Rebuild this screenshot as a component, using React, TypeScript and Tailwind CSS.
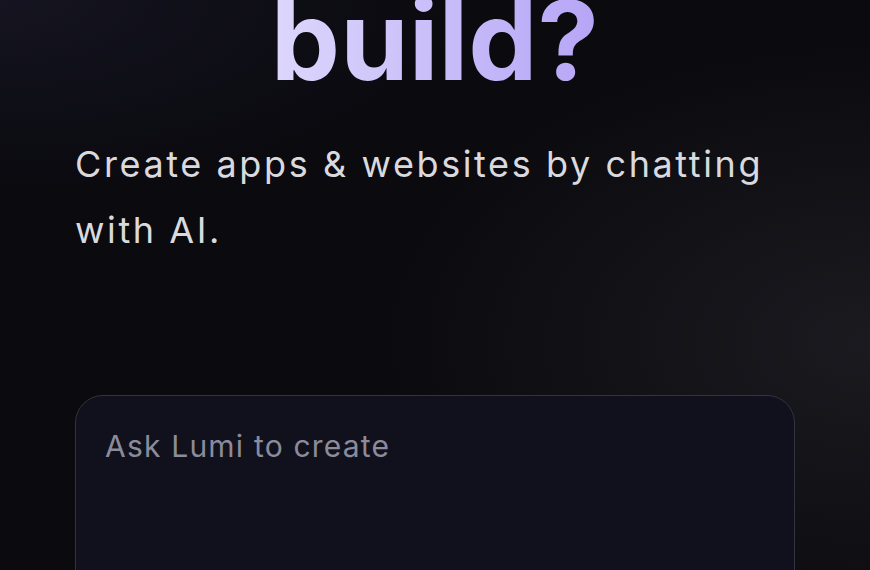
import React, { useState } from 'react';

const App: React.FC = () => {
  const [prompt, setPrompt] = useState('');

  return (
    <div className="relative h-[570px] w-full overflow-hidden bg-[#0a0a0f] font-['Inter',sans-serif]">
      {/* soft lighting behind content */}
      <div className="pointer-events-none absolute inset-0 bg-[radial-gradient(ellipse_75%_70%_at_100%_60%,rgba(38,37,43,0.6),transparent_75%)]" />
      <div className="pointer-events-none absolute inset-0 bg-[radial-gradient(ellipse_70%_45%_at_0%_0%,rgba(22,21,34,0.9),transparent_75%)]" />

      <div className="relative mx-auto flex w-[720px] flex-col">
        <h1 className="mt-[-15px] text-center text-[110px] font-bold leading-[110px]">
          <span className="bg-linear-to-r from-[#ddd7fc] to-[#b6a5f6] bg-clip-text text-transparent">build?</span>
        </h1>

        <p className="mt-[36px] text-[36px] leading-[66px] tracking-[2.6px] text-[#dadade]">
          Create apps &amp; websites by chatting with AI.
        </p>

        <div className="mt-[132px] h-[260px] rounded-[28px] border border-[#33333f] bg-[#11111d] px-[29px] pt-[28px]">
          <textarea
            value={prompt}
            onChange={e => setPrompt(e.target.value)}
            placeholder="Ask Lumi to create"
            className="h-full w-full resize-none bg-transparent text-[30px] leading-[45px] tracking-[1.2px] text-[#e4e4ea] outline-none placeholder:text-[#8c8b99]"
          />
        </div>
      </div>
    </div>
  );
};

export default App;
